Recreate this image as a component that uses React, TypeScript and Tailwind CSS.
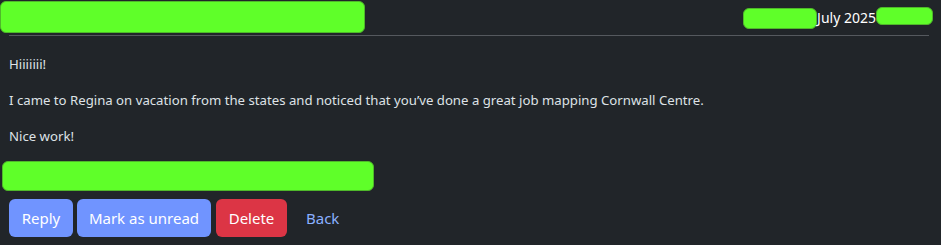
export default function App() {
  const green = "bg-[#5fff29] border border-[#4fb82a]";
  return (
    <div
      className="w-[941px] h-[245px] bg-[#212529] text-[#dee2e6] overflow-hidden"
      style={{ fontFamily: '"Noto Sans", "Open Sans", sans-serif' }}
    >
      {/* header */}
      <div className="flex items-start justify-between pt-[1px] h-[35px]">
        <div className={`${green} w-[365px] h-[32px] rounded-[6px]`} />
        <div className="flex items-center pt-[5px] pr-[8px] text-[14px] leading-[20px] text-white">
          <div className={`${green} w-[74px] h-[21px] rounded-[6px] mt-[2px]`} />
          <span>July 2025</span>
          <div className={`${green} w-[57px] h-[18px] rounded-[6px] -mt-[3px]`} />
        </div>
      </div>
      <div className="mx-[9px] mr-[12px] h-[1px] bg-[#55595e]" />

      {/* body */}
      <div className="px-[9px] pt-[18px] text-[13.2px] leading-[20px]">
        <p className="mb-[16px]">Hiiiiiii!</p>
        <p className="mb-[16px]">
          I came to Regina on vacation from the states and noticed that you’ve done a great job mapping Cornwall Centre.
        </p>
        <p>Nice work!</p>
      </div>

      <div className={`${green} ml-[2px] mt-[15px] w-[372px] h-[30px] rounded-[6px]`} />

      {/* actions */}
      <div className="flex items-center gap-[4px] px-[9px] mt-[8px]">
        <button className="h-[38px] w-[64px] rounded-[6px] bg-[#7094ff] text-white text-[15px]">Reply</button>
        <button className="h-[38px] w-[134px] rounded-[6px] bg-[#7094ff] text-white text-[15px]">Mark as unread</button>
        <button className="h-[38px] w-[71px] ml-[1px] rounded-[6px] bg-[#dc3545] text-white text-[15px]">Delete</button>
        <button className="h-[38px] px-[15px] text-[#8ab0ff] text-[15px]">Back</button>
      </div>
    </div>
  );
}
